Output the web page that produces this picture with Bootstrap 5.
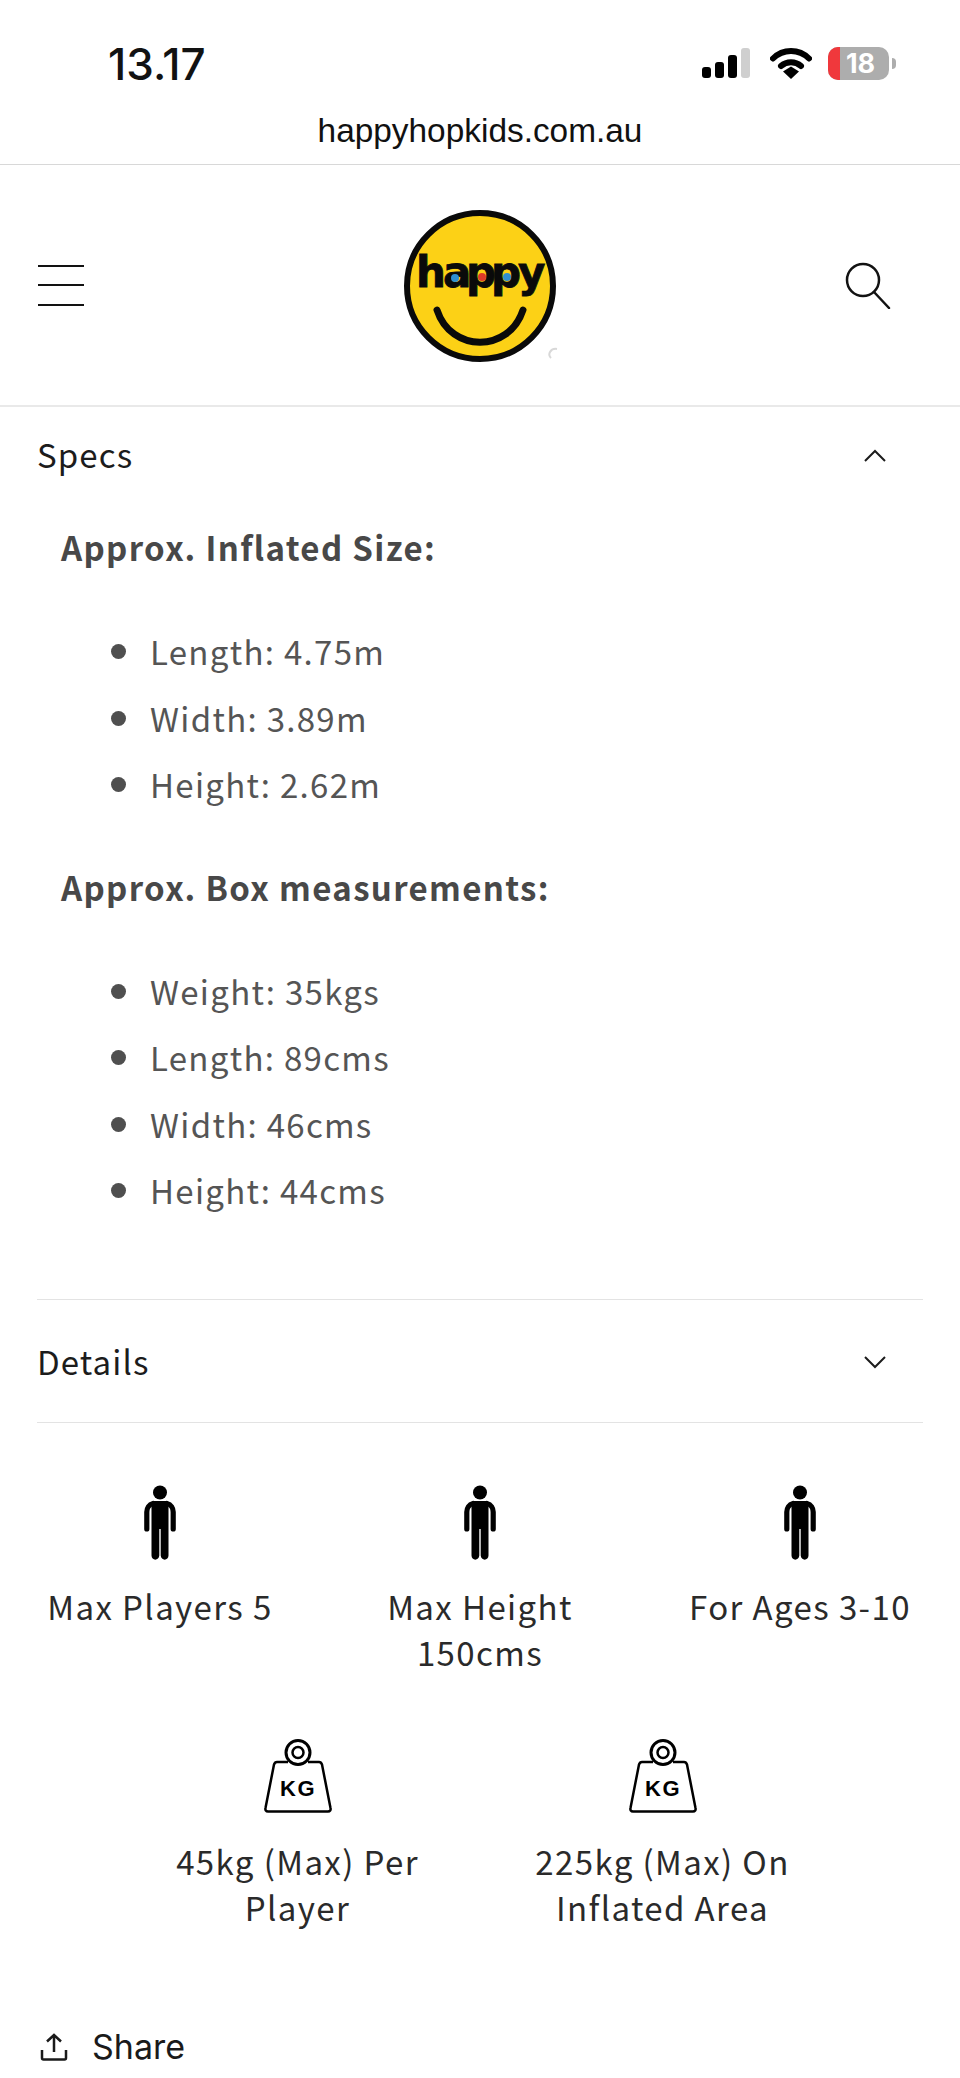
<!DOCTYPE html>
<html>
<head>
  <meta charset="utf-8">
  <title>Happy Hop Kids</title>
  <link rel="stylesheet" href="https://cdn.jsdelivr.net/npm/bootstrap@5.3.0/dist/css/bootstrap.min.css">
  <style>
    body { background: #fff; font-family: "Noto Sans CJK JP", "Noto Sans", sans-serif; color: #121212; overflow: hidden; }
    .status-row { height: 116px; padding: 46px 64px 0 108px; font-family: Inter, "Liberation Sans", sans-serif; }
    .status-time { font-size: 44px; font-weight: 500; line-height: 36px; }
    .status-icons { margin-top: 1px; }
    .batt-body { width: 61px; height: 33px; border-radius: 10px; background: #adadad; color: #fff; font-size: 27px; font-weight: 700; line-height: 33px; overflow: hidden; }
    .batt-red { width: 12px; background: #f0383c; }
    .batt-nub { width: 4px; height: 11px; background: #adadad; border-radius: 0 4px 4px 0; margin-left: 3px; }
    .url-row { height: 49px; font-family: "Liberation Sans", sans-serif; font-size: 33.4px; line-height: 30px; color: #111; border-bottom: 1px solid #d8d8d8; }
    .site-head { height: 242px; padding: 0 38px; border-bottom: 2px solid #e9e9e9; }
    .head-side { flex: 1 1 0; }
    .burger span { display: block; width: 46px; height: 2px; background: #121212; margin-bottom: 17.5px; }
    .burger span:last-child { margin-bottom: 0; }
    .search-ico { margin-right: 31px; }
    .page-wrap { padding: 0 37px; }
    .acc-head { font-size: 33px; line-height: 40px; letter-spacing: 1.1px; color: #1c1c1c; }
    .specs-head { padding-top: 27px; }
    .chev { margin-right: 36px; }
    .chev-up { margin-top: 3px; }
    .chev-down { margin-top: 2px; }
    .specs-body { padding: 0 0 0 24px; color: #555; font-size: 33px; letter-spacing: 1.3px; }
    .specs-title { font-weight: 700; font-size: 33px; line-height: 44px; letter-spacing: 1.35px; color: #484848; }
    .specs-first { margin: 51px 0 49px; }
    .specs-second { margin: 47px 0 49px; }
    .specs-list { padding-left: 89px; margin: 0; list-style: none; }
    .specs-list li { height: 66.5px; line-height: 66.5px; display: flex; align-items: center; }
    .specs-list li::before { content: ""; width: 15px; height: 15px; border-radius: 50%; background: #4f4f4f; margin: 1px 24px 0 -39px; flex: none; }
    .acc-line { border-top: 1px solid #e3e3e3; }
    .details-line { margin-top: 75.5px; }
    .details-head { height: 122px; }
    .feat-row { color: #2a2a2a; font-size: 33px; line-height: 46.5px; letter-spacing: 1.4px; text-align: center; }
    .feat-top { margin-top: 62px; }
    .feat-bottom { margin-top: 63.5px; }
    .feat-third { width: 320px; padding: 0 8px; }
    .feat-half { width: 365px; padding: 0 40px; }
    .person-ico { margin-bottom: 22.5px; }
    .kg-ico { margin-bottom: 24.5px; }
    .kg-ico text { letter-spacing: 0; }
    .share-row { font-family: Inter, "Liberation Sans", sans-serif; font-size: 34px; color: #1a1a1a; line-height: 44px; padding-left: 3px; margin-top: 94.5px; }
  </style>
</head>
<body>
  <!-- phone status bar -->
  <div class="status-row d-flex justify-content-between align-items-start">
    <div class="status-time">13.17</div>
    <div class="status-icons d-flex align-items-start">
      <svg width="50" height="32" viewBox="0 0 50 32" class="me-3">
        <rect x="2" y="20" width="9" height="11" rx="3" fill="#000"/>
        <rect x="15" y="15" width="9" height="16" rx="3" fill="#000"/>
        <rect x="28" y="8" width="9" height="23" rx="3" fill="#000"/>
        <rect x="41" y="1" width="9" height="30" rx="3" fill="#cfcfcf"/>
      </svg>
      <svg width="42" height="32" viewBox="0 0 42 32" class="ms-1 me-3">
        <path d="M3 11.500C13 1.500 29 1.500 39 11.500" fill="none" stroke="#000" stroke-width="6" stroke-linecap="round"/>
        <path d="M11 19C16.500 14 25.500 14 31 19" fill="none" stroke="#000" stroke-width="6" stroke-linecap="round"/>
        <path d="M13 24.500L21 19.500L29 24.500L21 32Z" fill="#000"/>
      </svg>
      <div class="batt-body d-flex">
        <div class="batt-red"></div>
        <div class="flex-grow-1 text-center pe-2">18</div>
      </div>
      <div class="batt-nub align-self-center"></div>
    </div>
  </div>
  <div class="url-row text-center">happyhopkids.com.au</div>

  <!-- site header -->
  <header class="site-head d-flex align-items-center">
    <div class="head-side">
      <div class="burger"><span></span><span></span><span></span></div>
    </div>
    <svg width="160" height="156" viewBox="-1 -1 160 156">
      <circle cx="79" cy="78" r="73" fill="#fcd116" stroke="#0a0a0a" stroke-width="6"/>
      <text y="79" x="15 42 65 90 117" font-family="DejaVu Sans" font-weight="700" font-size="42" fill="#0a0a0a" stroke="#0a0a0a" stroke-width="0.8">happy</text>
      <circle cx="54" cy="70" r="4" fill="#2f8fd0"/>
      <circle cx="81" cy="69" r="4" fill="#dd3a2a"/>
      <circle cx="106" cy="69" r="4" fill="#2f8fd0"/>
      <path d="M36 102C50 145 108 145 122 102" fill="none" stroke="#0a0a0a" stroke-width="7" stroke-linecap="round"/>
      <path d="M156 141C150 140 146 146 150 150" fill="none" stroke="#d8d8d8" stroke-width="2"/>
    </svg>
    <div class="head-side d-flex justify-content-end">
      <svg width="46" height="47" viewBox="0 0 46 47" class="search-ico" fill="none" stroke="#121212" stroke-width="2.500">
        <circle cx="18" cy="18" r="16"/>
        <path d="M29 30L44 46" stroke-linecap="round"/>
      </svg>
    </div>
  </header>

  <div class="page-wrap">
    <!-- specs accordion -->
    <div class="acc-head specs-head d-flex justify-content-between align-items-center">
      <span>Specs</span>
      <svg width="24" height="14" viewBox="0 0 24 14" class="chev chev-up" fill="none" stroke="#1c1c1c" stroke-width="2"><path d="M2 12L12 2L22 12"/></svg>
    </div>
    <div class="specs-body">
      <p class="specs-title specs-first">Approx. Inflated Size:</p>
      <ul class="specs-list">
        <li>Length: 4.75m</li>
        <li>Width: 3.89m</li>
        <li>Height: 2.62m</li>
      </ul>
      <p class="specs-title specs-second">Approx. Box measurements:</p>
      <ul class="specs-list">
        <li>Weight: 35kgs</li>
        <li>Length: 89cms</li>
        <li>Width: 46cms</li>
        <li>Height: 44cms</li>
      </ul>
    </div>

    <!-- details accordion -->
    <div class="acc-line details-line">
      <div class="acc-head details-head d-flex justify-content-between align-items-center">
        <span>Details</span>
        <svg width="24" height="14" viewBox="0 0 24 14" class="chev chev-down" fill="none" stroke="#1c1c1c" stroke-width="2"><path d="M2 2L12 12L22 2"/></svg>
      </div>
    </div>
    <div class="acc-line"></div>
  </div>

  <!-- feature icons -->
  <div class="feat-row feat-top d-flex justify-content-center align-items-start">
    <div class="feat-third">
      <svg class="person-ico d-block mx-auto" width="32" height="75" viewBox="0 0 32 75"><use href="#person"/></svg>
      <div>Max Players 5</div>
    </div>
    <div class="feat-third">
      <svg class="person-ico d-block mx-auto" width="32" height="75" viewBox="0 0 32 75"><use href="#person"/></svg>
      <div>Max Height 150cms</div>
    </div>
    <div class="feat-third">
      <svg class="person-ico d-block mx-auto" width="32" height="75" viewBox="0 0 32 75"><use href="#person"/></svg>
      <div>For Ages 3-10</div>
    </div>
  </div>
  <div class="feat-row feat-bottom d-flex justify-content-center align-items-start">
    <div class="feat-half">
      <svg class="kg-ico d-block mx-auto" width="70" height="74" viewBox="0 0 70 74"><use href="#kgweight"/></svg>
      <div>45kg (Max) Per Player</div>
    </div>
    <div class="feat-half">
      <svg class="kg-ico d-block mx-auto" width="70" height="74" viewBox="0 0 70 74"><use href="#kgweight"/></svg>
      <div>225kg (Max) On Inflated Area</div>
    </div>
  </div>

  <!-- share -->
  <div class="page-wrap">
    <div class="share-row d-flex align-items-center">
      <svg width="28" height="28" viewBox="0 0 28 28" fill="none" stroke="#1a1a1a" stroke-width="2.500" class="me-4">
        <path d="M14 19V2M7 8.500L14 2L21 8.500"/>
        <path d="M2 17V25C2 26 2.500 26.500 3.500 26.500H24.500C25.500 26.500 26 26 26 25V17"/>
      </svg>
      <span>Share</span>
    </div>
  </div>

  <svg width="0" height="0" class="position-absolute">
    <defs>
      <g id="person">
        <circle cx="16" cy="7.500" r="7" fill="#000"/>
        <path d="M10 16H22C23.500 16 24.500 17 24.500 18.500V70.500C24.500 76 17 76 16.700 70.500V44H15.300V70.500C15 76 7.500 76 7.500 70.500V18.500C7.500 17 8.500 16 10 16Z" fill="#000"/>
        <path d="M9 18.500C5 19.500 2.800 23 2.800 27V44M23 18.500C27 19.500 29.200 23 29.200 27V44" fill="none" stroke="#000" stroke-width="5.200" stroke-linecap="round"/>
      </g>
      <g id="kgweight">
        <circle cx="35" cy="13.500" r="12" fill="#fff" stroke="#000" stroke-width="3"/>
        <circle cx="35" cy="13.500" r="5.500" fill="#fff" stroke="#000" stroke-width="2.500"/>
        <path d="M25 23H14C12.500 23 11.500 24 11 25.500L2.500 69C2 71 3 72.500 5 72.500H65C67 72.500 68 71 67.500 69L59 25.500C58.500 24 57.500 23 56 23H45" fill="none" stroke="#000" stroke-width="2.500"/>
        <text x="35" y="57" text-anchor="middle" font-family="Liberation Sans" font-weight="700" font-size="22" fill="#000">KG</text>
      </g>
    </defs>
  </svg>

  <script src="https://cdn.jsdelivr.net/npm/bootstrap@5.3.0/dist/js/bootstrap.bundle.min.js"></script>
</body>
</html>
